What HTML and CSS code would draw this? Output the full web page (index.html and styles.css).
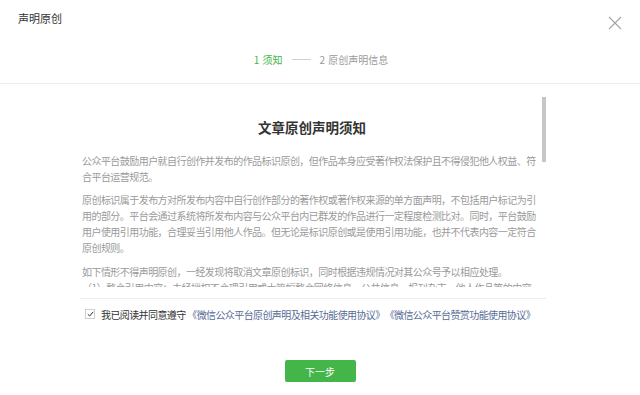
FILE: index.html
```html
<!DOCTYPE html>
<html lang="zh-CN">
<head>
    <meta charset="UTF-8">
    <meta name="viewport" content="width=device-width, initial-scale=1.0">
    <title>声明原创</title>
    <link rel="stylesheet" href="styles.css">
</head>
<body>
    <div class="dialog">
        <div class="dialog-hd">
            <h3 class="dialog-title">声明原创</h3>
            <a class="dialog-close" href="#" title="关闭">
                <svg width="14" height="14" viewBox="0 0 14 14">
                    <path d="M1 1 L13 13 M13 1 L1 13" stroke="#a3a3a3" stroke-width="1.1" fill="none"/>
                </svg>
            </a>
        </div>

        <div class="steps">
            <span class="step current">1 须知</span>
            <span class="step-line"></span>
            <span class="step">2 原创声明信息</span>
        </div>

        <div class="dialog-bd">
            <div class="notice">
                <div class="notice-inner">
                    <h2 class="notice-title">文章原创声明须知</h2>
                    <p>公众平台鼓励用户就自行创作并发布的作品标识原创，但作品本身应受著作权法保护且不得侵犯他人权益、符合平台运营规范。</p>
                    <p>原创标识属于发布方对所发布内容中自行创作部分的著作权或著作权来源的单方面声明，不包括用户标记为引用的部分。平台会通过系统将所发布内容与公众平台内已群发的作品进行一定程度检测比对。同时，平台鼓励用户使用引用功能，合理妥当引用他人作品。但无论是标识原创或是使用引用功能，也并不代表内容一定符合原创规则。</p>
                    <p>如下情形不得声明原创，一经发现将取消文章原创标识，同时根据违规情况对其公众号予以相应处理。<br>（1）整合引用内容：未经授权不合理引用或大篇幅整合网络信息、公共信息、报刊杂志、他人作品等的内容。</p>
                </div>
                <span class="scroll-thumb"></span>
            </div>

            <div class="agree">
                <span class="checkbox">
                    <svg width="7" height="6" viewBox="0 0 7 6">
                        <path d="M0.8 3.2 L2.7 5 L6.2 0.8" stroke="#333" stroke-width="1" fill="none"/>
                    </svg>
                </span>
                <span class="agree-text">我已阅读并同意遵守 <a href="#">《微信公众平台原创声明及相关功能使用协议》</a><a href="#">《微信公众平台赞赏功能使用协议》</a></span>
            </div>
        </div>

        <div class="dialog-ft">
            <button type="button" class="btn-primary">下一步</button>
        </div>
    </div>
</body>
</html>
```

FILE: styles.css
```css
body {
    margin: 0;
    font-family: "Noto Sans CJK SC", "Microsoft YaHei", sans-serif;
    background-color: #fff;
    color: #333;
    text-spacing-trim: space-all;
}

.dialog {
    width: 640px;
    height: 395px;
    position: relative;
    overflow: hidden;
}

.dialog-hd {
    height: 36px;
    padding-left: 18px;
    display: flex;
    align-items: center;
}

.dialog-title {
    margin: 0;
    font-size: 11px;
    font-weight: normal;
    color: #333;
}

.dialog-close {
    position: absolute;
    top: 11px;
    right: 18px;
    width: 14px;
    height: 14px;
    display: block;
}

.steps {
    height: 47px;
    border-bottom: 1px solid #ececec;
    display: flex;
    align-items: center;
    justify-content: center;
    gap: 9px;
    font-size: 10px;
    color: #9a9a9a;
    padding-left: 2px;
}

.step {
    word-spacing: 1px;
}

.step.current {
    color: #44b549;
}

.step-line {
    width: 19px;
    height: 1px;
    background-color: #d0d0d0;
}

.dialog-bd {
    width: 466px;
    margin-left: 80px;
    padding-top: 11px;
}

.notice {
    position: relative;
    height: 192px;
    overflow: hidden;
}

.notice-inner {
    width: 460px;
    padding-left: 2px;
}

.notice-title {
    margin: 22px 0 0;
    font-size: 13.5px;
    line-height: 20px;
    text-align: center;
    color: #333;
}

.notice p {
    margin: 7px 0 0;
    font-size: 10px;
    letter-spacing: -0.55px;
    line-height: 16px;
    color: #9a9a9a;
}

.notice p:first-of-type {
    margin-top: 16px;
}

.notice p:last-of-type {
    margin-top: 8px;
}

.scroll-thumb {
    position: absolute;
    left: 462px;
    top: 2px;
    width: 4px;
    height: 65px;
    background-color: #c6c6c6;
}

.agree {
    margin-top: 11px;
    border-top: 1px solid #ececec;
    height: 30px;
    padding-left: 5px;
    display: flex;
    align-items: center;
    gap: 6px;
    font-size: 10px;
    letter-spacing: -0.6px;
}

.checkbox {
    width: 8px;
    height: 8px;
    border: 1px solid #cfcfcf;
    display: flex;
    align-items: center;
    justify-content: center;
}

.agree-text {
    color: #333;
    white-space: nowrap;
}

.agree-text a {
    color: #576b95;
    text-decoration: none;
}

.dialog-ft {
    display: flex;
    justify-content: center;
    padding-top: 31px;
}

.btn-primary {
    width: 71px;
    height: 22px;
    border: none;
    border-radius: 2px;
    background-color: #44b549;
    color: #fff;
    font-family: inherit;
    font-size: 10px;
    cursor: pointer;
}
```
